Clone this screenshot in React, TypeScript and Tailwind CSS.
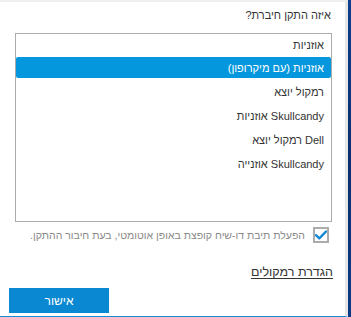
import React from 'react';

const devices = [
  'אוזניות',
  'אוזניות (עם מיקרופון)',
  'רמקול יוצא',
  'Skullcandy אוזניות',
  'Dell רמקול יוצא',
  'Skullcandy אוזנייה',
];

const App = () => {
  const selected = 1;

  return (
    <div className="flex w-[351px] h-[317px] bg-gradient-to-b from-[#0c3f8e] via-[#0a2f6e] to-[#0b3b86]">
      <div
        dir="rtl"
        className="flex flex-col w-[348px] h-[317px] bg-white border-t-2 border-t-[#efefef] border-r-[3px] border-r-[#e6e6e6] border-b border-b-[#1a8ad6] pr-[13px] pl-[9px]"
        style={{ fontFamily: '"Liberation Sans", "DejaVu Sans", sans-serif' }}
      >
        <div className="ml-[6px] flex flex-col">
          <p className="pt-[5px] text-[11px] leading-[16px] text-[#333] pr-[1px]">איזה התקן חיברת?</p>

          {/* device list */}
          <div className="mt-[10px] h-[189px] border border-[#acacac] bg-white">
            {devices.map((name, i) => (
              <div key={name} className={i === 0 ? 'h-[22px] flex' : 'h-[24px] flex'}>
                <div
                  className={
                    i === selected
                      ? 'mt-[1px] h-[21px] w-full flex items-center pr-[7px] rounded-[2px] bg-[#0497de] text-white'
                      : 'w-full flex items-center pr-[7px] text-[#333]'
                  }
                >
                  <span className="text-[11px] leading-[16px]">{name}</span>
                </div>
              </div>
            ))}
          </div>

          <div className="mt-[5px] flex items-center gap-[8px] pr-[3px]">
            <div className="w-[16px] h-[16px] border-2 border-[#acacac] flex items-center justify-center shrink-0">
              <svg width="12" height="10" viewBox="0 0 12 10">
                <path d="M1 5.2 L4.3 8.4 L11 1.5" fill="none" stroke="#1689d4" strokeWidth="2.4" strokeLinecap="round" strokeLinejoin="round" />
              </svg>
            </div>
            <span className="text-[10.5px] leading-[16px] text-[#8a8a8a] whitespace-nowrap">
              הפעלת תיבת דו-שיח קופצת באופן אוטומטי, בעת חיבור ההתקן.
            </span>
          </div>

          <div className="mt-[21px] flex">
            <a href="#" className="text-[12.5px] leading-[16px] text-[#333] underline underline-offset-2 -mr-[1px]">
              הגדרת רמקולים
            </a>
          </div>
        </div>

        <div className="mt-[8px] flex justify-end">
          <button className="w-[100px] h-[25px] bg-[#0a89d2] text-white text-[12px] leading-[16px]">
            אישור
          </button>
        </div>
      </div>
    </div>
  );
};

export default App;
